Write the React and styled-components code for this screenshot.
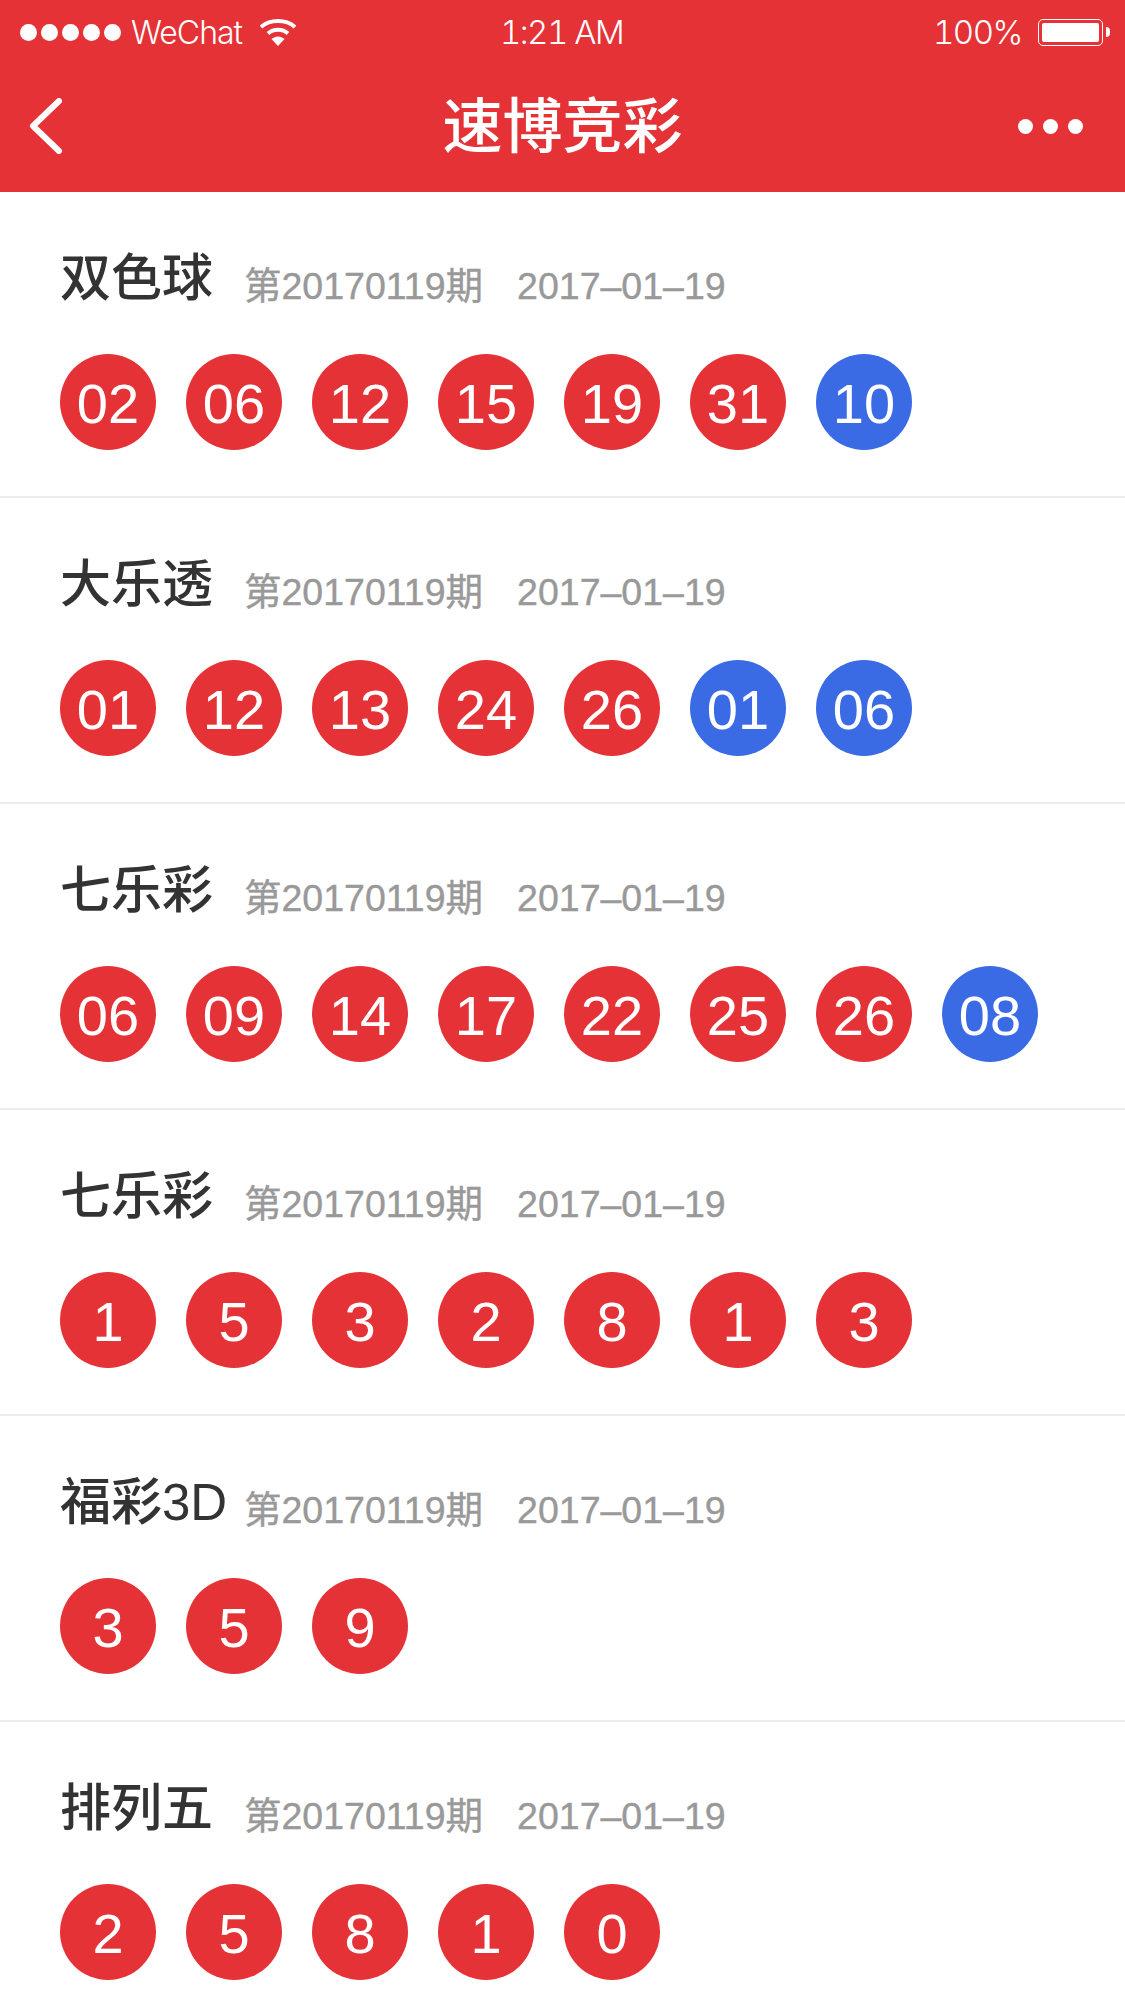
import React from "react";
import styled, {createGlobalStyle} from "styled-components";

const GlobalStyle = createGlobalStyle`
  html, body {
    margin: 0;
    padding: 0;
    background: #fff;
  }
  * {
    box-sizing: border-box;
  }
`;

const Page = styled.div`
  width: 1125px;
  height: 2001px;
  overflow: hidden;
  background: #fff;
  font-family: "Liberation Sans", "Noto Sans CJK SC", sans-serif;
`;

const Top = styled.header`
  background: #E53237;
  color: #fff;
  height: 192px;
`;

const StatusBar = styled.div`
  height: 60px;
  padding: 4px 22px 0 20px;
  display: grid;
  grid-template-columns: 1fr auto 1fr;
  align-items: center;
  font-family: Inter, "Liberation Sans", sans-serif;
  font-weight: 300;
  font-size: 32px;
`;

const StatusLeft = styled.div`
  display: flex;
  align-items: center;
`;

const StatusRight = styled.div`
  display: flex;
  align-items: center;
  justify-content: flex-end;
`;

const Dots = styled.div`
  display: flex;
  gap: 4px;
  margin-right: 10px;
`;

const Dot = styled.span`
  width: 17px;
  height: 17px;
  border-radius: 50%;
  background: #fff;
`;

const Carrier = styled.span`
  margin-right: 18px;
  letter-spacing: -1px;
`;

const Figure = styled.span`
  font-size: 33px;
  font-variant-numeric: tabular-nums;
  letter-spacing: -1.5px;
`;

const Battery = styled.div`
  width: 65px;
  height: 27px;
  margin-left: 16px;
  padding: 3px;
  border: 1.5px solid #fff;
  border-radius: 5px;
  position: relative;

  &::before {
    content: "";
    display: block;
    height: 100%;
    background: #fff;
    border-radius: 2px;
  }

  &::after {
    content: "";
    position: absolute;
    left: 67px;
    top: 7px;
    width: 4px;
    height: 10px;
    background: #fff;
    border-radius: 0 4px 4px 0;
  }
`;

const NavBar = styled.nav`
  height: 132px;
  padding: 0 28px;
  display: grid;
  grid-template-columns: 1fr auto 1fr;
  align-items: center;
`;

const NavTitle = styled.h1`
  margin: 4px 0 0;
  font-size: 60px;
  font-weight: 500;
  line-height: 1;
`;

const More = styled.div`
  display: flex;
  justify-content: flex-end;
  gap: 10px;
  margin-right: 14px;

  span {
    width: 15px;
    height: 15px;
    border-radius: 50%;
    background: #fff;
  }
`;

const Draw = styled.section`
  height: 306px;
  padding: 55px 0 0 60px;
  border-bottom: 2px solid #ededed;
`;

const DrawHead = styled.div`
  display: flex;
  align-items: baseline;
  height: 107px;
`;

const Name = styled.h2`
  margin: 0;
  width: 184px;
  flex: none;
  font-size: 51px;
  line-height: 64px;
  font-weight: 500;
  color: #333;
  white-space: nowrap;
`;

const Meta = styled.span`
  position: relative;
  top: 3px;
  font-size: 37.5px;
  line-height: 50px;
  color: #999;
  -webkit-text-stroke: 0.4px #999;
  margin-right: ${(props) => props.gap || 0}px;
`;

const Balls = styled.div`
  display: flex;
  gap: 30px;
`;

const Ball = styled.span`
  width: 96px;
  height: 96px;
  padding-top: 2px;
  border-radius: 50%;
  background: ${(props) => (props.blue ? "#3A6BE5" : "#E53237")};
  color: #fff;
  font-size: 56px;
  display: flex;
  align-items: center;
  justify-content: center;
`;

const draws = [
    {name: "双色球", red: ["02", "06", "12", "15", "19", "31"], blue: ["10"]},
    {name: "大乐透", red: ["01", "12", "13", "24", "26"], blue: ["01", "06"]},
    {name: "七乐彩", red: ["06", "09", "14", "17", "22", "25", "26"], blue: ["08"]},
    {name: "七乐彩", red: ["1", "5", "3", "2", "8", "1", "3"], blue: []},
    {name: "福彩3D", red: ["3", "5", "9"], blue: []},
    {name: "排列五", red: ["2", "5", "8", "1", "0"], blue: []},
];

const Wifi = () => (
    <svg width="36" height="28" viewBox="0 0 36 28">
        <path d="M1 9C10 1 26 1 35 9" fill="none" stroke="#fff" strokeWidth="4"/>
        <path d="M8 15.5C13.5 10.5 22.5 10.5 28 15.5" fill="none" stroke="#fff" strokeWidth="4"/>
        <path d="M11.5 21L18 28L24.500 21C20.500 17.500 15.500 17.500 11.500 21Z" fill="#fff"/>
    </svg>
);

const Back = () => (
    <svg width="34" height="56" viewBox="0 0 34 56">
        <path d="M31 3L5 28L31 53" fill="none" stroke="#fff" strokeWidth="6" strokeLinecap="round" strokeLinejoin="round"/>
    </svg>
);

const App = () => {
    return (
        <Page>
            <GlobalStyle/>
            <Top>
                <StatusBar>
                    <StatusLeft>
                        <Dots>
                            {[0, 1, 2, 3, 4].map((i) => <Dot key={i}/>)}
                        </Dots>
                        <Carrier>WeChat</Carrier>
                        <Wifi/>
                    </StatusLeft>
                    <Figure>1:21 AM</Figure>
                    <StatusRight>
                        <Figure>100%</Figure>
                        <Battery/>
                    </StatusRight>
                </StatusBar>
                <NavBar>
                    <Back/>
                    <NavTitle>速博竞彩</NavTitle>
                    <More><span/><span/><span/></More>
                </NavBar>
            </Top>
            {draws.map((draw, ind) => (
                <Draw key={ind}>
                    <DrawHead>
                        <Name>{draw.name}</Name>
                        <Meta gap={34}>第20170119期</Meta>
                        <Meta>2017–01–19</Meta>
                    </DrawHead>
                    <Balls>
                        {draw.red.map((n, i) => <Ball key={"r" + i}>{n}</Ball>)}
                        {draw.blue.map((n, i) => <Ball key={"b" + i} blue>{n}</Ball>)}
                    </Balls>
                </Draw>
            ))}
        </Page>
    )
}

export default App;
